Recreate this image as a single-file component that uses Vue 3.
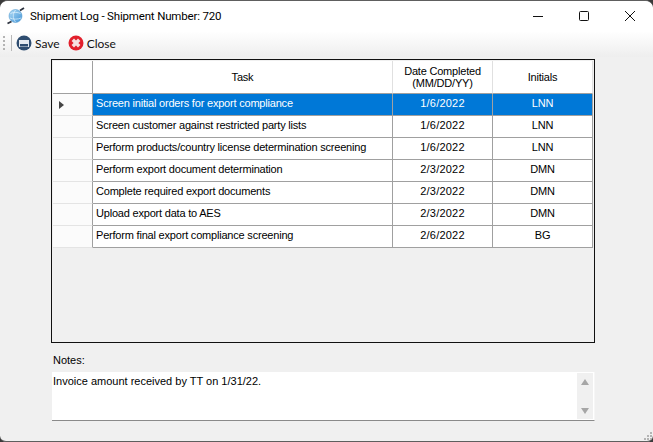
<script setup>
const rows = [
  { task: 'Screen initial orders for export compliance', date: '1/6/2022', initials: 'LNN', selected: true },
  { task: 'Screen customer against restricted party lists', date: '1/6/2022', initials: 'LNN' },
  { task: 'Perform products/country license determination screening', date: '1/6/2022', initials: 'LNN' },
  { task: 'Perform export document determination', date: '2/3/2022', initials: 'DMN' },
  { task: 'Complete required export documents', date: '2/3/2022', initials: 'DMN' },
  { task: 'Upload export data to AES', date: '2/3/2022', initials: 'DMN' },
  { task: 'Perform final export compliance screening', date: '2/6/2022', initials: 'BG' }
]
</script>

<template>
  <div class="window">
    <div class="titlebar">
      <svg class="app-icon" width="18" height="18" viewBox="0 0 18 18">
        <defs>
          <linearGradient id="globe" x1="0" y1="0" x2="1" y2="1">
            <stop offset="0" stop-color="#b5def7" />
            <stop offset="1" stop-color="#3f93d6" />
          </linearGradient>
        </defs>
        <circle cx="8.5" cy="9" r="6.5" fill="url(#globe)" stroke="#5b9fd2" stroke-width="0.6" />
        <path d="M3.5 6.5c3-1.5 7-1.5 10 0M3 11c3 1.5 8 1.5 11 0M8.5 3c-3 4-3 8 0 12" fill="none" stroke="#e2f3fd" stroke-width="0.7" />
        <path d="M0.5 16.5 4.5 14.5M13 3.5 17 1" stroke="#2e3440" stroke-width="1.8" fill="none" />
      </svg>
      <span class="title">Shipment Log - Shipment Number: 720</span>
      <div class="controls">
        <svg width="12" height="12" viewBox="0 0 12 12" class="ctl"><path d="M1 6.5h10" stroke="#111" /></svg>
        <svg width="12" height="12" viewBox="0 0 12 12" class="ctl"><rect x="1.5" y="1.5" width="9" height="9" rx="1" fill="none" stroke="#111" /></svg>
        <svg width="12" height="12" viewBox="0 0 12 12" class="ctl"><path d="M1 1l10 10M11 1 1 11" stroke="#111" /></svg>
      </div>
    </div>

    <div class="toolbar">
      <span class="grip"></span>
      <span class="sep"></span>
      <button class="tool">
        <svg width="16" height="16" viewBox="0 0 16 16">
          <circle cx="8" cy="8" r="7.5" fill="#2f4d70" />
          <rect x="3" y="5" width="10" height="7" fill="#e6ebf1" />
          <rect x="4" y="9" width="8" height="2.5" fill="#2f4d70" />
        </svg>
        Save
      </button>
      <button class="tool">
        <svg width="16" height="16" viewBox="0 0 16 16">
          <circle cx="8" cy="8" r="7.5" fill="#e2202c" />
          <path d="M4.8 4.8l6.4 6.4M11.2 4.8l-6.4 6.4" stroke="#f6e2e2" stroke-width="3.4" />
        </svg>
        Close
      </button>
    </div>

    <div class="content">
      <div class="grid">
        <div class="row head">
          <div class="cell rowhead"></div>
          <div class="cell task">Task</div>
          <div class="cell date">Date Completed<br />(MM/DD/YY)</div>
          <div class="cell initials">Initials</div>
        </div>
        <div v-for="row in rows" :key="row.task" class="row" :class="{ selected: row.selected }">
          <div class="cell rowhead"><span v-if="row.selected" class="arrow"></span></div>
          <div class="cell task left">{{ row.task }}</div>
          <div class="cell date">{{ row.date }}</div>
          <div class="cell initials">{{ row.initials }}</div>
        </div>
      </div>

      <div class="notes-label">Notes:</div>
      <div class="notes">
        <div class="notes-text">Invoice amount received by TT on 1/31/22.</div>
        <div class="scroll">
          <span class="up"></span>
          <span class="down"></span>
        </div>
      </div>
    </div>

    <svg class="resize" width="10" height="10" viewBox="0 0 10 10">
      <path d="M7 1h2v2H7zM4 4h2v2H4zM7 4h2v2H7zM1 7h2v2H1zM4 7h2v2H4zM7 7h2v2H7z" fill="#b4b4b4" />
    </svg>
  </div>
</template>

<style>
html, body {
  margin: 0;
  background: #3a3a3a;
}
</style>

<style scoped>
.window {
  position: relative;
  width: 653px;
  height: 442px;
  box-sizing: border-box;
  background: #f0f0f0;
  border-top: 1px solid #5e5e5e;
  border-bottom: 1px solid #5e5e5e;
  border-radius: 8px 8px 6px 6px;
  overflow: hidden;
  font-family: "Liberation Sans", Arial, sans-serif;
  font-size: 11px;
  color: #000;
}
.titlebar {
  height: 30px;
  background: #fff;
  display: flex;
  align-items: center;
  padding-left: 7px;
}
.app-icon {
  margin-right: 5px;
}
.title {
  font-family: Roboto, sans-serif;
  font-size: 11.5px;
  letter-spacing: -0.17px;
  flex: 1;
}
.controls {
  display: flex;
}
.ctl {
  width: 46px;
  display: block;
}
.toolbar {
  height: 26px;
  background: linear-gradient(#fff, #eeeeee);
  display: flex;
  align-items: center;
  padding: 0 0 2px 3px;
  box-sizing: border-box;
}
.grip {
  width: 2px;
  height: 15px;
  margin-right: 6px;
  background: repeating-linear-gradient(#b4b4b4 0 2px, transparent 2px 4px);
}
.sep {
  width: 1px;
  height: 16px;
  background: #b8b8b8;
  margin-right: 4px;
}
.tool {
  border: 0;
  background: none;
  padding: 0;
  margin: 0 8px 0 0;
  display: flex;
  align-items: center;
  gap: 3px;
  font-family: Lato, sans-serif;
  font-size: 12px;
  color: #111;
}
.content {
  padding: 2px 58px 0 51px;
}
.grid {
  height: 284px;
  box-sizing: border-box;
  border: 1px solid #111;
  padding: 1px;
  letter-spacing: -0.2px;
}
.row {
  display: flex;
  height: 22px;
  width: 540px;
}
.row.head {
  height: 33px;
}
.cell {
  display: flex;
  align-items: center;
  justify-content: center;
  text-align: center;
  box-sizing: border-box;
  border-right: 1px solid #a0a0a0;
  border-bottom: 1px solid #a0a0a0;
  background: #fff;
  line-height: 12px;
  padding-bottom: 3px;
}
.head .cell {
  border-right-color: #e0e0e0;
  padding-bottom: 0;
}
.rowhead {
  width: 40px;
  background: #fbfbfb;
  border-bottom-color: #e4e4e4;
  justify-content: flex-start;
  padding-left: 6px;
}
.head .rowhead {
  background: #fff;
  border-right-color: #a0a0a0;
  border-bottom-color: #a0a0a0;
}
.task {
  width: 300px;
}
.date {
  width: 100px;
  letter-spacing: 0.2px;
}
.head .date {
  letter-spacing: -0.2px;
}
.initials {
  width: 100px;
  border-right: 1px solid #a0a0a0;
}
.left {
  justify-content: flex-start;
  padding-left: 3px;
}
.selected .cell:not(.rowhead) {
  background: #0078d7;
  color: #fff;
}
.selected .rowhead {
  padding-bottom: 0;
}
.arrow {
  width: 0;
  height: 0;
  border-left: 5px solid #444;
  border-top: 4px solid transparent;
  border-bottom: 4px solid transparent;
}
.notes-label {
  margin: 10px 0 0 2px;
  line-height: 14px;
}
.notes {
  margin: 5px 0 0 1px;
  height: 49px;
  width: 543px;
  background: #fff;
  border-bottom: 1px solid #8a8a8a;
  border-right: 1px solid #f6f6f6;
  box-sizing: border-box;
  display: flex;
}
.notes-text {
  flex: 1;
  padding: 3px 1px;
  font-size: 11px;
}
.scroll {
  width: 16px;
  margin: 1px 1px 1px 0;
  background: #f0f0f0;
  display: flex;
  flex-direction: column;
  justify-content: space-between;
  align-items: center;
  padding: 6px 0 5px;
  box-sizing: border-box;
}
.up, .down {
  width: 0;
  height: 0;
  border-left: 4px solid transparent;
  border-right: 4px solid transparent;
}
.up {
  border-bottom: 6px solid #a6a6a6;
}
.down {
  border-top: 6px solid #a6a6a6;
}
.resize {
  position: absolute;
  right: 0;
  bottom: 0;
}
</style>
